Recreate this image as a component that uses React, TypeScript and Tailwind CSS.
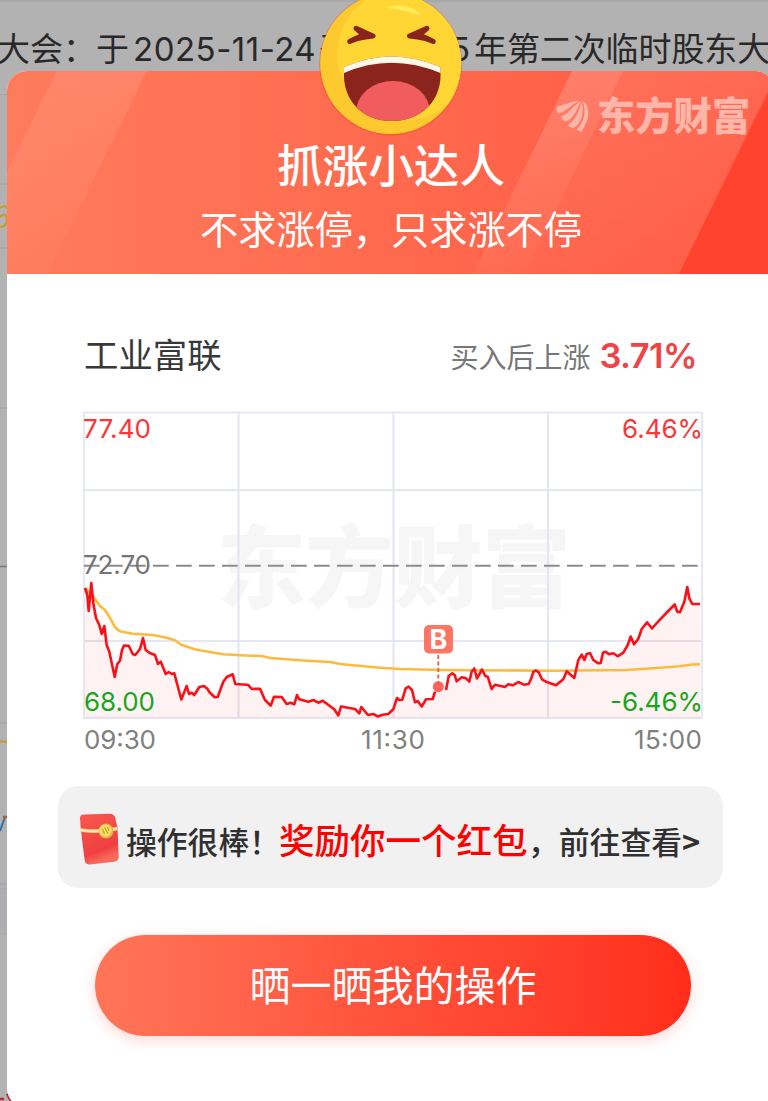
import React from "react";

const pricePoints =
  "85,588 87.3,595 88.7,611 91.3,583 93.3,603 96,618 99.3,625 101.7,634 104.3,626 106.7,645 109.3,651.7 114.7,677 117.3,664 120,660.7 122,650 124,645.5 128.7,645.7 132.7,654 135.3,655 140,649 143,638 145.7,650 149.3,652.7 155,655 158,664 160.7,661.7 163.3,668 165.7,674 168.7,672 171.7,674 174.3,673.3 181.3,699.5 186.7,686 189,694 191.7,692.7 194.3,695 199.3,687 204,686 207.3,688.7 209.3,692 214.7,697.3 217.7,697 223.3,681.7 226.7,677 232.7,674.3 235.3,684 246.7,684.7 248.3,685 251.7,689 260,688.7 265,700 270.7,705.7 274,696.7 281.7,697 286.7,704 290.7,702.7 294.3,704.3 297,695 299.3,699.3 308.3,701.7 313.3,700 318.3,702.7 322.7,700.7 334.3,709.3 338.3,715.5 341,706.5 355,709 359.3,713.3 361.3,707 368,715 373.3,714 377.7,716.4 382.7,714.7 388.3,714 393.3,709.3 397,698 399.3,700 402.3,699.7 405.7,688.3 408.7,686.7 412,690 415,702.3 417.7,701 421.7,706.5 426,699.3 432.7,699 435,691.7";

const priceAfterBuy =
  "446,690 448.7,676 452.3,673.3 454.7,675 456.7,681.3 461.7,677.3 466,678.3 469.3,681.7 471.7,671.5 474.3,668.5 477,678.4 482,669.5 485.3,676 487.7,676.7 491.7,689 495,684.7 505,687 508.3,684.3 512.7,685.3 518.3,682 524,684.7 528.7,684 531.3,678.3 533.3,671.8 536,670.5 538.7,672.3 542.3,679.7 546.7,682 556,685.3 563.3,679.3 566.7,671.3 574.3,678 578.3,660 581.7,654.6 584.3,660 586.7,653.9 590,653 593.3,660 598.3,663.3 600.7,663 603,652.6 605.3,651.7 609.3,654.3 613.3,653.3 617.7,656.3 623.3,652.7 627.7,645 630.7,636.5 634,644.3 638.3,638.7 641.7,629 647,622.3 652,628.5 658.3,621.3 668.3,611 674.7,604.5 677.3,611.7 680,612.3 684.3,601.7 687.3,587 689.3,598.3 692.3,604 700,604";

const averagePoints =
  "85,588 91,594 95,599 100,606 105,610 110,618 115,627 118,630 121,631.5 133,633.7 153,635 166.7,637.7 175,640.3 181.7,645 196.7,649.7 223,654.3 250,655.7 261.7,656 270,658 306.7,660.7 330,662 340,664 380,667.7 400,669 440,670 553,670.7 626.7,670 653,668.3 680,666.3 691.7,664.5 700,664.3";

const Emoji = () => (
  <svg viewBox="316 -8 150 150" className="absolute left-[309px] -top-[79px] h-[150px] w-[150px]">
    <defs>
      <clipPath id="face">
        <circle cx="390.7" cy="63.5" r="70.5" />
      </clipPath>
      <clipPath id="mouth">
        <path d="M344 67 Q391 46 440.500 67 V76 C440.500 98 424 121 391.500 121 C360 121 344 98 344 76Z" />
      </clipPath>
    </defs>
    <circle cx="390.7" cy="64" r="71.5" fill="#e9402f" opacity="0.4" />
    <circle cx="390.7" cy="63.5" r="70.5" fill="#fcc92e" />
    <circle cx="404" cy="54" r="66.5" fill="#ffd634" clipPath="url(#face)" />
    <path d="M387 8 C398 3 415 6 421 16 C411 12 400 9 387 8Z" fill="#ffee58" />
    <g fill="#8b231d" stroke="#8b231d" strokeWidth="5" strokeLinecap="round" strokeLinejoin="round">
      <path d="M356 28.300 L373 36 L365.500 37 Q357 38 349.700 41.500 Q357 37.500 363.500 35 Z" />
      <path d="M427 28.300 L409.500 36 L417.500 37 Q426 38 433.300 41.500 Q426 37.500 419.500 35 Z" />
    </g>
    <g clipPath="url(#mouth)">
      <rect x="340" y="50" width="105" height="75" fill="#8b241d" />
      <ellipse cx="393" cy="112" rx="37" ry="31" fill="#f15c5e" />
      <path d="M340 50 H445 V75 L440.500 73 Q391 52.500 344 73 L340 75Z" fill="#fff8e8" />
    </g>
  </svg>
);

const BrandLogo = () => (
  <div className="absolute left-[549px] top-[24px] flex h-[42px] items-center text-[#ffb5a8]">
    <svg viewBox="556 98 34 36" className="h-[36px] w-[34px]" fill="currentColor">
      <path d="M556.500 106.500 C564 105.500 571 101 579 101 C571 105 567 111 558.500 113.500 Q556 111 556.500 106.500Z" />
      <path d="M561 116.500 C571 112.500 573 105 581 101.300 C577 109 574 119 566 121.500 Q562 120 561 116.500Z" />
      <path d="M567.500 125 C577 120 579 109 582 101.500 C584 112 582 124 573.500 128 Q569.500 127.500 567.500 125Z" />
      <path d="M583 101 C592 108 588.500 122 581 132 L576.500 129.500 C584.500 122 586 112 583 101Z" />
    </svg>
    <span className="ml-[7px] text-[38.3px] font-black leading-none">东方财富</span>
  </div>
);

const RedPacket = () => (
  <svg viewBox="78 812 42 56" className="h-[56px] w-[42px] shrink-0">
    <defs>
      <linearGradient id="packet" x1="0" y1="0" x2="0.3" y2="1">
        <stop offset="0" stopColor="#fb5750" />
        <stop offset="0.8" stopColor="#ee4040" />
        <stop offset="1" stopColor="#f9695c" />
      </linearGradient>
    </defs>
    <path d="M84 815.500 L110 814.700 Q114 815 115 818 L117.500 829 L118.700 858 Q118.500 862 114 862.700 L90 865.500 Q86 865.700 84.800 862 L81 832 L80 819 Q80 815.700 84 815.500Z" fill="url(#packet)" />
    <path d="M80.800 831 Q99 834 117.500 829.500" fill="none" stroke="#f7d37b" strokeWidth="3.800" />
    <path d="M81 831 Q99 834 117 829.500" fill="none" stroke="#fff1c5" strokeWidth="1.500" />
    <circle cx="106" cy="832" r="7.500" fill="#e9b23e" />
    <circle cx="105.500" cy="831.500" r="6.200" fill="#f9dc68" />
    <path d="M102.500 830 L104.500 835 M104.500 828.500 L108 834.500 M107.500 828 L109 832" stroke="#d09e35" strokeWidth="1.200" fill="none" />
  </svg>
);

const PriceChart = () => (
  <svg
    viewBox="77 405 632 350"
    className="h-[350px] w-[632px] font-['Inter','Noto_Sans_CJK_SC',sans-serif]"
  >
    <text x="217" y="600" textLength="354" fontSize="89" fontWeight="900" fill="#f6f6f6">
      东方财富
    </text>
    <g stroke="#e5e7f0" strokeWidth="2.200" fill="none">
      <rect x="84" y="412.500" width="618" height="305.500" strokeWidth="1.800" />
      <path d="M84 490 H702 M84 641 H702 M238.500 413 V718 M393.500 413 V718 M548 413 V718" />
    </g>
    <polygon points={`84.5,718 ${pricePoints} 438,687 ${priceAfterBuy} 701,718`} fill="#ff2020" fillOpacity="0.06" />
    <path d="M84 565.800 H698" stroke="#8c8c8c" strokeWidth="1.900" strokeDasharray="15.700 7.300" />
    <polyline points={averagePoints} fill="none" stroke="#fcbb3e" strokeWidth="2.600" strokeLinejoin="round" />
    <g fill="none" stroke="#fb1018" strokeWidth="2.600" strokeLinejoin="round">
      <polyline points={pricePoints} />
      <polyline points={priceAfterBuy} />
    </g>

    {/* buy marker */}
    <path d="M438.300 655 V684" stroke="#f5554b" strokeWidth="1.800" strokeDasharray="4 2.500" />
    <circle cx="438.300" cy="686.700" r="5.500" fill="#ff4a3e" fillOpacity="0.85" />
    <rect x="424" y="625" width="29" height="28.500" rx="5" fill="#ff7564" />
    <text x="438.500" y="649" textAnchor="middle" fontSize="27" fontWeight="700" fill="#fff">
      B
    </text>

    <g fontSize="26">
      <text x="83" y="437.500" textLength="68" fill="#fa3638">77.40</text>
      <text x="622" y="437.500" textLength="81" fill="#fa3638">6.46%</text>
      <text x="83" y="574" textLength="68" fill="#747474">72.70</text>
      <text x="84" y="710.500" textLength="71" fill="#18a51c">68.00</text>
      <text x="610" y="710.500" textLength="93" fill="#18a51c">-6.46%</text>
      <text x="84" y="749" textLength="72" fill="#808080">09:30</text>
      <text x="361" y="749" textLength="64" fill="#808080">11:30</text>
      <text x="634" y="749" textLength="68" fill="#808080">15:00</text>
    </g>
  </svg>
);

const PageBehind = () => (
  <div className="col-start-1 row-start-1 h-[1101px] overflow-hidden bg-[#b2b2b2]">
    <div className="h-[94px] border-t-2 border-[#a9a9a9] pt-[23px]">
      <p className="-ml-[3px] flex whitespace-nowrap text-[33px] leading-[48px] text-[#292929]">
        <span className="shrink-0">大会：于</span>
        <span className="ml-[4px] w-[186px] shrink-0 tracking-[0.5px]">2025-11-24</span>
        <span className="shrink-0">召开</span>
        <span className="w-[89px] shrink-0 pl-[3px] tracking-[0.3px]">2025</span>
        <span className="shrink-0 tracking-[-0.1px]">年第二次临时股东大</span>
      </p>
    </div>
    <svg viewBox="0 94 12 1007" className="h-[1007px] w-[12px]" fill="none">
      <path d="M0 94.500 H12 M0 184 H12 M0 248 H12 M0 408 H12 M0 723 H12 M0 884 H12 M0 889 H12 M0 929 H12 M0 934 H12" stroke="#9fa2a8" strokeWidth="1" />
      <rect y="889" width="12" height="40" fill="#aeaeb2" />
      <path d="M0 566.500 H12" stroke="#777" strokeWidth="1.500" />
      <path d="M0 208 Q5 204 8 209 M0 217 Q6 211 7 219 Q7 227 0 227" stroke="#c79b2c" strokeWidth="2" />
      <path d="M0 741 L12 743" stroke="#c79b2c" strokeWidth="2" />
      <path d="M0 831 L5 817" stroke="#376da6" strokeWidth="2" />
      <path d="M3 817 H12" stroke="#b75a2e" strokeWidth="2.500" />
      <path d="M0 1099 H4 M7 1094 L11 1101" stroke="#b52b35" strokeWidth="2.500" />
    </svg>
  </div>
);

const App = () => {
  return (
    <main className="grid h-[1101px] w-[768px] grid-cols-[768px] overflow-hidden font-['Inter','Noto_Sans_CJK_SC',sans-serif]">
      <PageBehind />

      <section className="relative col-start-1 row-start-1 ml-[7px] mt-[71px] h-[1037px] w-[768px] rounded-[20px] bg-white">
        <header className="relative h-[203px] overflow-hidden rounded-t-[20px] bg-linear-to-r from-[#ff7b5c] to-[#ff5740] text-white">
          <svg viewBox="7 71 768 203" className="absolute inset-0 h-full w-full">
            <defs>
              <linearGradient id="band" x1="0" y1="0" x2="0" y2="1">
                <stop offset="0" stopColor="#fff" stopOpacity="0.1" />
                <stop offset="1" stopColor="#fff" stopOpacity="0.02" />
              </linearGradient>
            </defs>
            <path d="M57 71 H147 L47 274 H-43Z" fill="url(#band)" />
            <path d="M572 71 H623 L525 274 H473Z" fill="url(#band)" />
            <path d="M572 71 H777 L679 274 H473Z" fill="url(#band)" />
            <path d="M777 75 L679 274 H777Z" fill="#ff432e" />
          </svg>
          <BrandLogo />
          <div className="relative flex flex-col items-center pt-[66px]">
            <h1 className="text-[45.6px] font-medium leading-[60px]">抓涨小达人</h1>
            <p className="mt-[8px] text-[38.2px] font-normal leading-[50px]">不求涨停，只求涨不停</p>
          </div>
        </header>
        <Emoji />

        <div className="mt-[58px] flex h-[48px] items-center justify-between pl-[77px] pr-[78px]">
          <h2 className="text-[34.4px] leading-none text-[#383838]">工业富联</h2>
          <p className="flex items-center text-[28px] leading-none text-[#777]">
            <span className="pt-[3px]">买入后上涨</span>
            <strong className="ml-[9px] text-[34.5px] font-semibold tracking-[-0.6px] text-[#ee4448]">3.71%</strong>
          </p>
        </div>

        <div className="ml-[70px] mt-[25px] flex">
          <PriceChart />
        </div>

        <a className="ml-[51px] mt-[31px] flex h-[102px] w-[665px] items-center whitespace-nowrap rounded-[20px] bg-[#f1f1f1] pl-[20px] pt-[4px] font-medium text-[#303030]">
          <RedPacket />
          <span className="ml-[6px] flex items-baseline pt-[6px] text-[30.8px]">
            <span className="w-[153px]">操作很棒！</span>
            <strong className="w-[249px] text-[35.5px] font-medium text-[#ff0000]">奖励你一个红包</strong>
            <span>，前往查看</span>
            <span className="font-['Noto_Sans_CJK_SC',sans-serif] font-bold">&gt;</span>
          </span>
        </a>

        <button className="ml-[88px] mt-[47px] flex h-[101px] w-[596px] items-center justify-center rounded-full bg-linear-to-r from-[#ff7558] via-[#ff503b] to-[#ff2d19] pt-[2px] text-[41px] font-normal leading-none text-white shadow-[0_4px_14px_rgba(255,70,60,0.22)]">
          晒一晒我的操作
        </button>
      </section>
    </main>
  );
};

export default App;
